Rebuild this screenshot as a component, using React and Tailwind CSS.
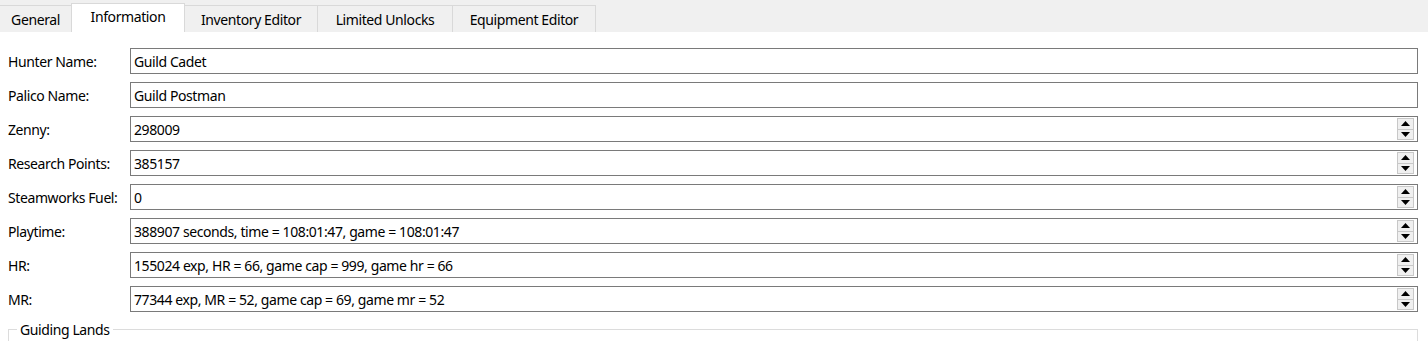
import React, { useState } from 'react';

const tabs = ['General', 'Information', 'Inventory Editor', 'Limited Unlocks', 'Equipment Editor'];

const tabWidths = {
  General: 'w-[72px]',
  Information: 'w-[114px]',
  'Inventory Editor': 'w-[134px]',
  'Limited Unlocks': 'w-[136px]',
  'Equipment Editor': 'w-[144px]',
};

const fields = [
  { label: 'Hunter Name:', value: 'Guild Cadet' },
  { label: 'Palico Name:', value: 'Guild Postman' },
  { label: 'Zenny:', value: '298009', spin: true },
  { label: 'Research Points:', value: '385157', spin: true },
  { label: 'Steamworks Fuel:', value: '0', spin: true },
  { label: 'Playtime:', value: '388907 seconds, time = 108:01:47, game = 108:01:47', spin: true },
  { label: 'HR:', value: '155024 exp, HR = 66, game cap = 999, game hr = 66', spin: true },
  { label: 'MR:', value: '77344 exp, MR = 52, game cap = 69, game mr = 52', spin: true },
];

const Spinner = () => (
  <div className="flex flex-col w-[17px] h-[22px] mr-[3px] border border-[#c8c8c8]">
    <div className="flex-1 flex items-center justify-center bg-[#f0f0f0] border-b border-[#c8c8c8]">
      <svg width="9" height="5" viewBox="0 0 9 5"><polygon points="4.5,0 9,5 0,5" fill="#000" /></svg>
    </div>
    <div className="flex-1 flex items-center justify-center bg-[#f0f0f0]">
      <svg width="9" height="5" viewBox="0 0 9 5"><polygon points="0,0 9,0 4.5,5" fill="#000" /></svg>
    </div>
  </div>
);

const App = () => {
  const [active, setActive] = useState('Information');

  return (
    <div className="w-[1428px] h-[341px] overflow-hidden bg-white text-[14px] text-black font-['Noto_Sans','Open_Sans',sans-serif]">
      {/* tab strip */}
      <div className="flex items-end h-[32px] bg-[#f0f0f0]">
        {tabs.map((t) => {
          const on = t === active;
          return (
            <button
              key={t}
              onClick={() => setActive(t)}
              className={`${tabWidths[t]} flex justify-center border border-b-0 border-[#d9d9d9] -ml-px first:ml-0 first:border-l-0 ${
                on ? 'h-[29px] bg-white pt-[3px] z-10' : 'h-[27px] bg-[#f0f0f0] pt-[4px]'
              }`}
            >
              <span className="leading-[19px] tracking-[-0.4px]">{t}</span>
            </button>
          );
        })}
      </div>

      {/* information page */}
      <div className="pt-[16px] pl-[8px] pr-[10px] flex flex-col gap-[8px]">
        {fields.map((f) => (
          <div key={f.label} className="flex items-center h-[26px]">
            <label className="w-[122px] shrink-0 tracking-[-0.4px]">{f.label}</label>
            <div className="flex-1 h-[26px] flex items-center border border-[#7a7a7a] bg-white">
              <span className="flex-1 pl-[3px] tracking-[-0.4px] whitespace-nowrap">{f.value}</span>
              {f.spin && <Spinner />}
            </div>
          </div>
        ))}

        <fieldset className="border border-[#dcdcdc] h-[60px] px-[8px]">
          <legend className="px-[3px] tracking-[-0.4px] leading-[19px]">Guiding Lands</legend>
        </fieldset>
      </div>
    </div>
  );
};

export default App;
